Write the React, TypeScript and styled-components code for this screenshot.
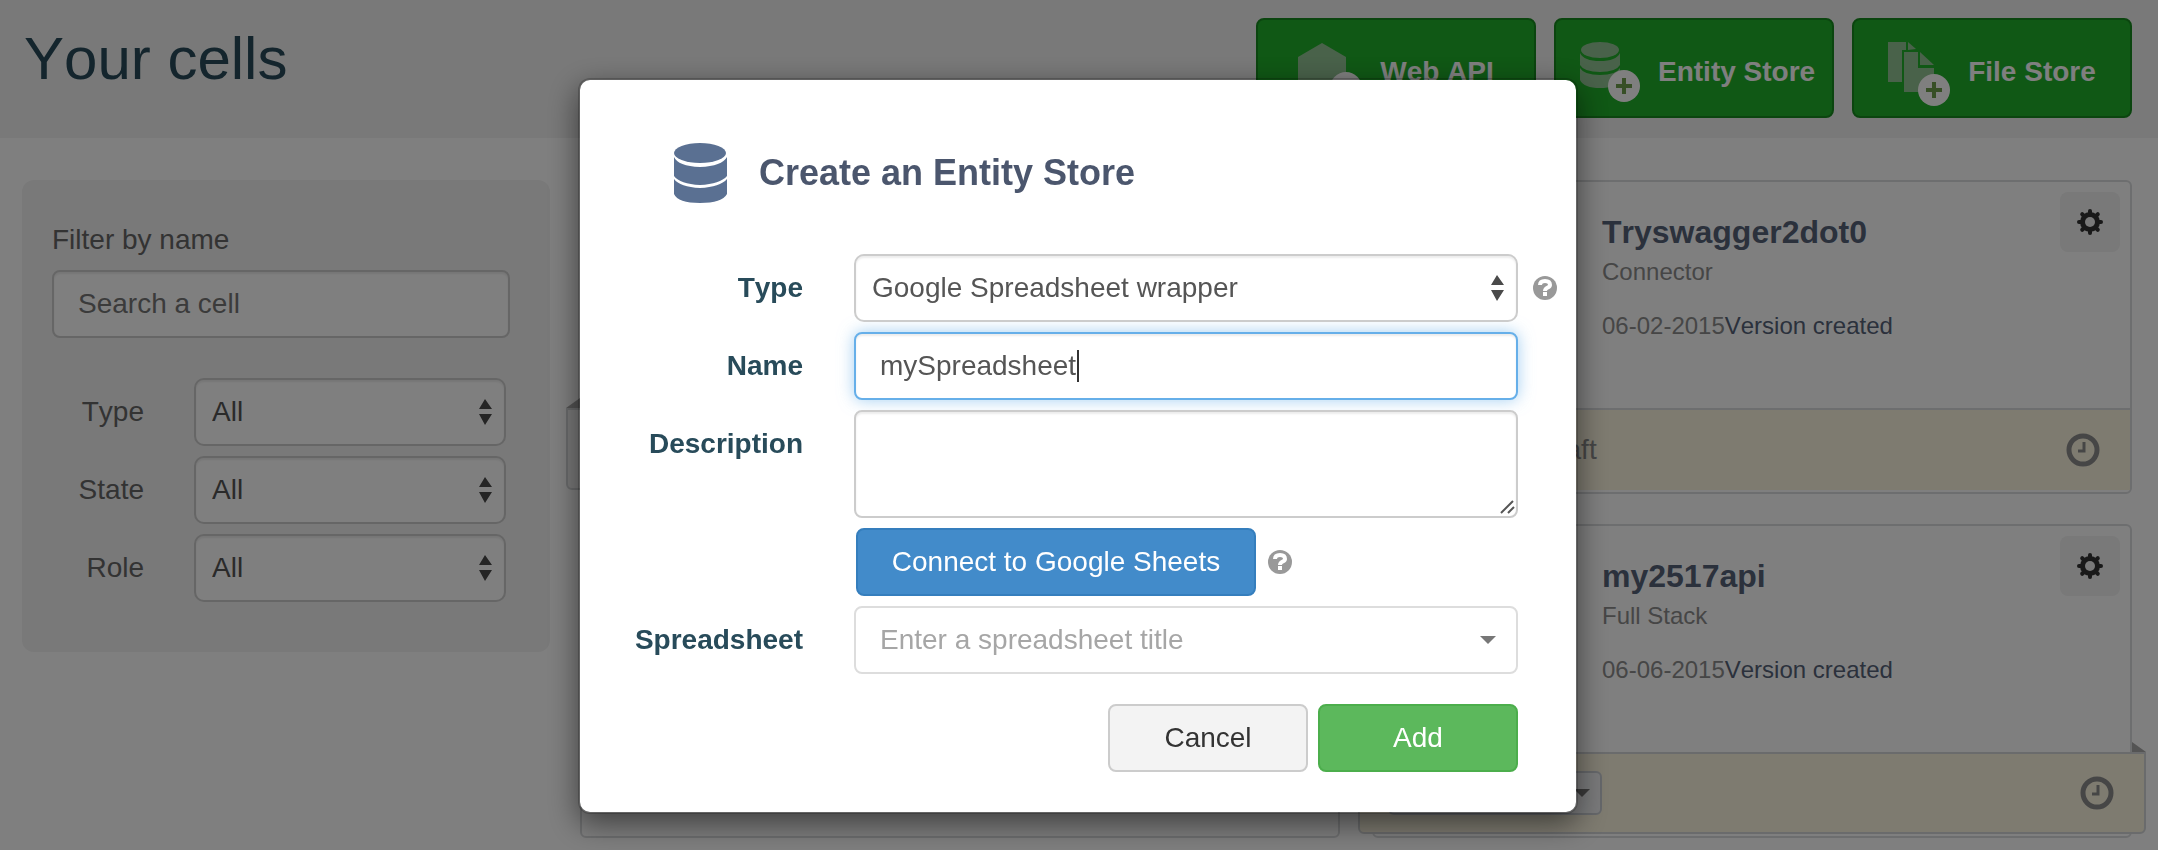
import React from 'react';
import styled, { createGlobalStyle, css } from 'styled-components';

const GlobalStyle = createGlobalStyle`
  *, *::before, *::after { box-sizing: border-box; }
  body {
    margin: 0;
    background: #fff;
    color: #333;
    font-family: "Liberation Sans", Arial, sans-serif;
    font-size: 28px;
    line-height: 40px;
    font-kerning: none;
  }
  button, input, select, textarea { font: inherit; font-kerning: none; }
  h1, h2, h3, p { margin: 0; }
`;

const Page = styled.div`
  min-height: 100vh;
`;

const Header = styled.header`
  display: flex;
  justify-content: space-between;
  align-items: flex-start;
  min-height: 138px;
  padding: 18px 26px 20px 24px;
  background: #f2f2f2;
`;

const PageTitle = styled.h1`
  padding-top: 6px;
  font-size: 60px;
  font-weight: 400;
  line-height: 70px;
  color: #284b5a;
`;

const Actions = styled.div`
  display: flex;
  gap: 18px;
`;

const ActionButton = styled.button`
  display: flex;
  justify-content: safe center;
  align-items: flex-start;
  gap: 18px;
  width: 280px;
  height: 100px;
  padding: 22px 24px 0;
  border: 2px solid #178a1e;
  border-radius: 8px;
  background: #20b02a;
  color: #fff;
  font-weight: 700;
  line-height: 60px;
  white-space: nowrap;

  svg { flex: none; }
`;

const Layout = styled.div`
  display: grid;
  grid-template-columns: 528px 1fr;
  align-items: start;
  gap: 30px;
  padding: 42px 26px 12px 22px;
`;

const FilterPanel = styled.aside`
  padding: 40px 40px 50px 30px;
  border-radius: 12px;
  background: #f2f2f2;
  color: #666;
`;

const SearchLabel = styled.label`
  display: block;
  padding-bottom: 10px;
`;

const FilterRow = styled.div`
  display: grid;
  grid-template-columns: 92px 312px;
  align-items: center;
  gap: 50px;
  margin-top: 10px;

  label { text-align: right; }
`;

const FilterRows = styled.div`
  padding-top: 30px;
`;

const control = css`
  display: block;
  width: 100%;
  margin: 0;
  border: 2px solid #ccc;
  border-radius: 8px;
  outline: none;
  background-color: #fff;
  box-shadow: inset 0 2px 2px rgba(0, 0, 0, 0.075);
  color: #555;
`;

const TextInput = styled.input<{ $active?: boolean }>`
  ${control}
  height: 68px;
  padding: 0 24px;

  &::placeholder { color: #777; opacity: 1; }

  ${({ $active }) => $active && css`
    border-color: #66afe9;
    box-shadow: inset 0 2px 2px rgba(0, 0, 0, 0.075), 0 0 16px rgba(102, 175, 233, 0.6);
    background-image: linear-gradient(#333, #333);
    background-repeat: no-repeat;
    background-size: 2px 32px;
    background-position: 221px center;
  `}
`;

const ComboInput = styled(TextInput)`
  padding-right: 60px;
  border-color: #ddd;
  box-shadow: none;

  &::placeholder { color: #a6a6a6; }
`;

const TextArea = styled.textarea`
  ${control}
  height: 108px;
  padding: 12px 24px;
  resize: none;
`;

const ControlWrap = styled.div`
  position: relative;
`;

const Select = styled.select`
  ${control}
  height: 68px;
  padding: 0 50px 0 16px;
  border-radius: 10px;
  appearance: none;
`;

const StepArrows = styled.svg`
  position: absolute;
  top: 21px;
  right: 14px;
  fill: #4a4a4a;
  pointer-events: none;
`;

const ComboCaret = styled.svg`
  position: absolute;
  top: 30px;
  right: 22px;
  fill: #777;
  pointer-events: none;
`;

const Grip = styled.svg`
  position: absolute;
  right: 2px;
  bottom: 3px;
  stroke: #555;
  stroke-width: 2;
  pointer-events: none;
`;

const CellGrid = styled.main`
  display: grid;
  grid-template-columns: 1fr 1fr;
  gap: 30px 32px;
`;

const Card = styled.article`
  display: flex;
  flex-direction: column;
  height: 314px;
  border: 2px solid #dadcde;
  border-radius: 6px;
  background: #fff;
`;

const CardBody = styled.div`
  display: flex;
  justify-content: space-between;
  align-items: flex-start;
  flex: 1;
  padding: 10px 10px 0 228px;
`;

const CardText = styled.div`
  padding-top: 20px;
  font-size: 24px;
  line-height: 36px;
`;

const CardTitle = styled.h3`
  padding-bottom: 2px;
  font-size: 32px;
  line-height: 40px;
  color: #566379;
`;

const CardKind = styled.p`
  color: #8d8d8d;
`;

const CardDate = styled.p`
  padding-top: 18px;
  color: #566379;

  time { color: #8d8d8d; }
`;

const GearButton = styled.button`
  display: grid;
  place-items: center;
  width: 60px;
  height: 60px;
  padding: 0;
  border: 0;
  border-radius: 8px;
  background: #f2f2f2;
`;

const CardFooter = styled.footer<{ $wide?: boolean; $tone?: string }>`
  position: relative;
  display: flex;
  justify-content: space-between;
  align-items: center;
  height: 82px;
  margin-bottom: 2px;
  padding: 0 30px 0 162px;
  border-top: 2px solid #dadcde;
  background: ${({ $tone }) => $tone ?? '#fcf6e1'};
  color: #8d8d8d;

  ${({ $wide }) => $wide && css`
    margin: 0 -16px 2px;
    padding-left: 28px;
    border: 2px solid #d4d6d8;
    border-radius: 0 0 6px 6px;
  `}
`;

const Fold = styled.svg<{ $side: 'left' | 'right' }>`
  position: absolute;
  top: -12px;
  ${({ $side }) => $side}: -2px;
  fill: #a8a8a8;
`;

const StateButton = styled.button`
  display: flex;
  justify-content: flex-end;
  align-items: center;
  width: 214px;
  height: 44px;
  padding: 0 10px;
  border: 2px solid #ccd0d6;
  border-radius: 6px;
  background: #f4f5f7;
`;

const Backdrop = styled.div`
  position: fixed;
  inset: 0;
  display: flex;
  justify-content: center;
  align-items: flex-start;
  padding: 78px 2px 0 0;
  background: rgba(0, 0, 0, 0.5);
`;

const Dialog = styled.section`
  width: 1000px;
  border: 2px solid rgba(0, 0, 0, 0.2);
  border-radius: 12px;
  background: #fff;
  background-clip: padding-box;
  box-shadow: 0 10px 30px rgba(0, 0, 0, 0.5);
`;

const DialogHeader = styled.div`
  display: flex;
  align-items: center;
  gap: 32px;
  padding: 62px 58px 50px 94px;
`;

const DialogTitle = styled.h2`
  font-size: 36px;
  line-height: 62px;
  color: #4b566d;
`;

const Form = styled.form`
  display: grid;
  gap: 10px;
  padding-bottom: 40px;
`;

const Field = styled.div`
  display: grid;
  grid-template-columns: 1fr 664px 58px;
  align-items: start;
`;

const FieldLabel = styled.label`
  padding-right: 51px;
  font-weight: 700;
  line-height: 68px;
  text-align: right;
  color: #284b5a;
`;

const HelpButton = styled.button`
  display: flex;
  padding: 0;
  border: 0;
  background: none;
`;

const FieldHelp = styled.div`
  padding: 22px 0 0 15px;
`;

const ConnectRow = styled.div`
  display: flex;
  align-items: center;
  grid-column: 2;
  gap: 12px;
  padding-left: 2px;
`;

const Button = styled.button<{ $kind: 'primary' | 'success' | 'plain' }>`
  width: ${({ $kind }) => ($kind === 'primary' ? '400px' : '200px')};
  height: 68px;
  padding: 0;
  border: 2px solid;
  border-radius: 8px;

  ${({ $kind }) => ({
    primary: css`background: #428bca; border-color: #357ebd; color: #fff;`,
    success: css`background: #5cb85c; border-color: #4cae4c; color: #fff;`,
    plain: css`background: #f3f3f3; border-color: #ccc; color: #333;`,
  })[$kind]}
`;

const ButtonRow = styled.div`
  display: flex;
  justify-content: flex-end;
  gap: 10px;
  padding: 20px 58px 0 0;
`;

const PlusBadge = ({ x, y }: { x: number; y: number }) => (
  <g>
    <circle cx={x} cy={y} r="16" fill="#fff" />
    <path d={`M${x - 8} ${y}h16M${x} ${y - 8}v16`} stroke="#6e9e4c" strokeWidth="4" />
  </g>
);

const WebApiIcon = () => (
  <svg width="64" height="64" aria-hidden="true">
    <path d="M24 1L48 15V43L24 57L0 43V15Z" fill="#93c495" />
    <PlusBadge x={48} y={46} />
  </svg>
);

const EntityAddIcon = () => (
  <svg width="60" height="60" aria-hidden="true">
    <g fill="#93c495">
      <ellipse cx="20" cy="8" rx="19" ry="8" />
      <path d="M0 11Q4 19 20 19T40 11V23Q36 30 20 30T0 23Z" />
      <path d="M0 26Q4 33 20 33T40 26V38Q36 46 20 46T0 38Z" />
    </g>
    <PlusBadge x={44} y={44} />
  </svg>
);

const FilesAddIcon = () => (
  <svg width="62" height="64" aria-hidden="true">
    <g fill="#93c495">
      <path d="M0 0H18V8H14V40H0Z" />
      <path d="M20 0L28 7L20 8Z" />
      <path d="M16 10H30V26H46V50H16Z" />
      <path d="M32 10L46 23H32Z" />
    </g>
    <PlusBadge x={46} y={48} />
  </svg>
);

const DatabaseIcon = () => (
  <svg width="53" height="62" aria-hidden="true">
    <g fill="#5a7092">
      <ellipse cx="26" cy="11" rx="26" ry="10" />
      <path d="M0 15Q4 24 26 25Q48 24 53 15V34Q46 42 26 43Q6 42 0 34Z" />
      <path d="M0 37Q6 45 26 46Q46 45 53 37V52Q48 61 26 61Q4 61 0 52Z" />
    </g>
  </svg>
);

const GearIcon = () => (
  <svg width="28" height="28" viewBox="-14 -14 28 28" aria-hidden="true">
    {[0, 45, 90, 135].map((a) => (
      <line key={a} y1="-11" y2="11" stroke="#333" strokeWidth="4" strokeLinecap="round" transform={`rotate(${a})`} />
    ))}
    <circle r="10" fill="#333" />
    <circle r="5" fill="#f2f2f2" />
  </svg>
);

const ClockIcon = () => (
  <svg width="34" height="34" fill="none" stroke="#8d8d8d" role="img" aria-label="History">
    <circle cx="17" cy="17" r="14" strokeWidth="5" />
    <path d="M18 9V18H12" strokeWidth="3" />
  </svg>
);

const HelpIcon = () => (
  <svg width="24" height="24" aria-hidden="true">
    <circle cx="12" cy="12" r="12" fill="#999" />
    <path d="M7 9C7 6 9 5 12 5S17 6 17 9C17 12 12 11 12 15" fill="none" stroke="#fff" strokeWidth="4" />
    <path d="M10 16H14V20H10Z" fill="#fff" />
  </svg>
);

const Caret = () => (
  <svg width="16" height="8" fill="#777" aria-hidden="true"><path d="M0 0H16L8 8Z" /></svg>
);

const Picker = ({ id, options }: { id: string; options: string[] }) => (
  <ControlWrap>
    <Select id={id}>{options.map((o) => <option key={o}>{o}</option>)}</Select>
    <StepArrows width="13" height="26" aria-hidden="true">
      <path d="M0 10L6 0L13 10ZM0 15H13L6 26Z" />
    </StepArrows>
  </ControlWrap>
);

const CellInfo = ({ name, kind, date }: { name: string; kind: string; date: string }) => (
  <CardBody>
    <CardText>
      <CardTitle>{name}</CardTitle>
      <CardKind>{kind}</CardKind>
      <CardDate><time>{date}</time>Version created</CardDate>
    </CardText>
    <GearButton type="button" aria-label={`${name} settings`}><GearIcon /></GearButton>
  </CardBody>
);

export default function App() {
  return (
    <Page>
      <GlobalStyle />
      <Header>
        <PageTitle>Your cells</PageTitle>
        <Actions>
          <ActionButton type="button"><WebApiIcon />Web API</ActionButton>
          <ActionButton type="button"><EntityAddIcon />Entity Store</ActionButton>
          <ActionButton type="button"><FilesAddIcon />File Store</ActionButton>
        </Actions>
      </Header>

      <Layout>
        <FilterPanel>
          <SearchLabel htmlFor="search">Filter by name</SearchLabel>
          <TextInput id="search" type="text" placeholder="Search a cell" />
          <FilterRows>
            {['Type', 'State', 'Role'].map((name) => (
              <FilterRow key={name}>
                <label htmlFor={`filter-${name}`}>{name}</label>
                <Picker id={`filter-${name}`} options={['All']} />
              </FilterRow>
            ))}
          </FilterRows>
        </FilterPanel>

        <CellGrid>
          <Card>
            <CardBody />
            <CardFooter $wide $tone="#f4f4f4">
              <Fold $side="left" width="14" height="10"><path d="M0 10L14 0V10Z" /></Fold>
            </CardFooter>
          </Card>
          <Card>
            <CellInfo name="Tryswagger2dot0" kind="Connector" date="06-02-2015" />
            <CardFooter><span>Draft</span><ClockIcon /></CardFooter>
          </Card>
          <Card />
          <Card>
            <CellInfo name="my2517api" kind="Full Stack" date="06-06-2015" />
            <CardFooter $wide>
              <Fold $side="right" width="14" height="10"><path d="M0 0L14 10H0Z" /></Fold>
              <StateButton type="button" aria-label="Change state"><Caret /></StateButton>
              <ClockIcon />
            </CardFooter>
          </Card>
        </CellGrid>
      </Layout>

      <Backdrop>
        <Dialog role="dialog" aria-modal="true" aria-labelledby="dialog-title">
          <DialogHeader>
            <DatabaseIcon />
            <DialogTitle id="dialog-title">Create an Entity Store</DialogTitle>
          </DialogHeader>
          <Form onSubmit={(e) => e.preventDefault()}>
            <Field>
              <FieldLabel htmlFor="type">Type</FieldLabel>
              <Picker id="type" options={['Google Spreadsheet wrapper']} />
              <FieldHelp>
                <HelpButton type="button" aria-label="Help on types"><HelpIcon /></HelpButton>
              </FieldHelp>
            </Field>
            <Field>
              <FieldLabel htmlFor="name">Name</FieldLabel>
              <TextInput id="name" type="text" defaultValue="mySpreadsheet" $active />
            </Field>
            <Field>
              <FieldLabel htmlFor="description">Description</FieldLabel>
              <ControlWrap>
                <TextArea id="description" />
                <Grip width="16" height="16" aria-hidden="true"><path d="M1 14L13 2M8 14L14 8" /></Grip>
              </ControlWrap>
            </Field>
            <Field>
              <ConnectRow>
                <Button type="button" $kind="primary">Connect to Google Sheets</Button>
                <HelpButton type="button" aria-label="Help on connecting"><HelpIcon /></HelpButton>
              </ConnectRow>
            </Field>
            <Field>
              <FieldLabel htmlFor="spreadsheet">Spreadsheet</FieldLabel>
              <ControlWrap>
                <ComboInput id="spreadsheet" type="text" placeholder="Enter a spreadsheet title" />
                <ComboCaret width="16" height="8" aria-hidden="true"><path d="M0 0H16L8 8Z" /></ComboCaret>
              </ControlWrap>
            </Field>
            <ButtonRow>
              <Button type="button" $kind="plain">Cancel</Button>
              <Button type="submit" $kind="success">Add</Button>
            </ButtonRow>
          </Form>
        </Dialog>
      </Backdrop>
    </Page>
  );
}
